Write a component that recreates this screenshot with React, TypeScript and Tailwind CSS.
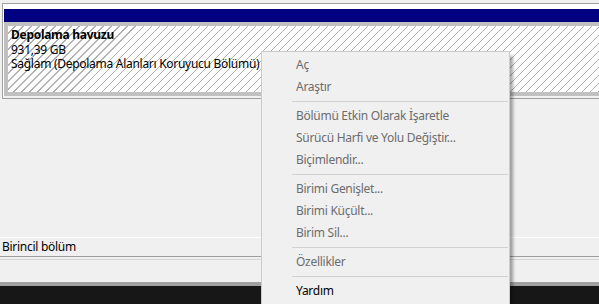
import React from "react";

type Item = { t?: string; sep?: boolean; enabled?: boolean };

const items: Item[] = [
  { t: "Aç" },
  { t: "Araştır" },
  { sep: true },
  { t: "Bölümü Etkin Olarak İşaretle" },
  { t: "Sürücü Harfi ve Yolu Değiştir..." },
  { t: "Biçimlendir..." },
  { sep: true },
  { t: "Birimi Genişlet..." },
  { t: "Birimi Küçült..." },
  { t: "Birim Sil..." },
  { sep: true },
  { t: "Özellikler" },
  { sep: true },
  { t: "Yardım", enabled: true },
];

export default function App() {
  return (
    <div
      className="relative w-[599px] h-[304px] overflow-hidden bg-[#f0f0f0] text-[12px] tracking-[-0.28px] text-black"
      style={{ fontFamily: '"Noto Sans", "Open Sans", sans-serif' }}
    >
      {/* top disk area */}
      <div className="h-[3px]" />
      <div className="ml-[2px] border-l border-t border-[#a0a0a0] bg-white h-[95px] flex flex-col">
        <div className="h-[5px]" />
        <div className="ml-[1px] h-[13px] bg-[#000080]" />
        <div className="ml-[1px] border-[4px] border-r-0 border-[#c0c0c0] h-[74px]">
          <div className="h-full bg-[repeating-linear-gradient(135deg,#ffffff_0px,#ffffff_4.9px,#b0b0b0_4.9px,#b0b0b0_5.66px)] pl-[3px] pt-[2px]">
            <div className="font-bold h-[14.5px] leading-[14px]">Depolama havuzu</div>
            <div className="h-[14.5px] leading-[14px]">931,39 GB</div>
            <div className="h-[14.5px] leading-[14px]">Sağlam (Depolama Alanları Koruyucu Bölümü)</div>
          </div>
        </div>
        <div className="h-[2px] bg-[#f0f0f0]" />
      </div>
      <div className="ml-[2px] h-px bg-[#a0a0a0]" />

      {/* empty area */}
      <div className="h-[138px]" />
      <div className="h-px bg-white" />
      <div className="h-[18px] flex items-center pl-[2px] leading-none">Birincil bölüm</div>
      <div className="h-px bg-[#a0a0a0]" />
      <div className="h-[2px]" />
      <div className="h-px bg-[#d4d4d4]" />
      <div className="h-[22px]" />
      <div className="h-[4px] bg-[#a0a0a0]" />
      <div className="h-[20px] bg-[#171717]" />

      {/* context menu */}
      <div className="absolute left-[261px] top-[51px] w-[249px] h-[270px] border border-[#cccccc] bg-[#f0f0f0] pt-[2px] shadow-[4px_4px_3px_-1px_rgba(0,0,0,0.35)]">
        {items.map((it, i) =>
          it.sep ? (
            <div key={i} className="h-[7px] pt-[3px] pl-[30px] pr-[1px]">
              <div className="h-px bg-[#d2d2d2]" />
            </div>
          ) : (
            <div
              key={i}
              className={
                "h-[22px] flex items-center pl-[34px] leading-none " +
                (it.enabled ? "text-black" : "text-[#6d6d6d]")
              }
            >
              {it.t}
            </div>
          )
        )}
      </div>
    </div>
  );
}
